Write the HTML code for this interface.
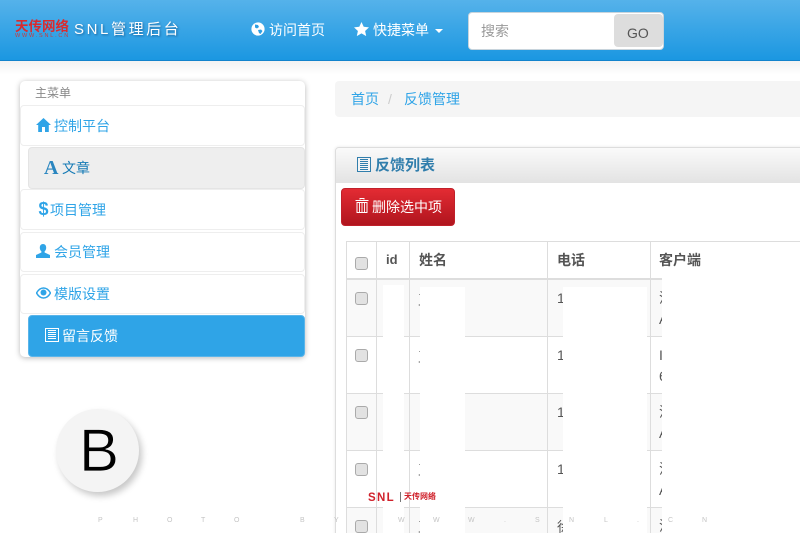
<!DOCTYPE html>
<html lang="zh"><head><meta charset="utf-8"><title>SNL管理后台</title>
<style>
html,body{margin:0;padding:0;background:#fff;width:800px;height:533px;overflow:hidden}
#p{position:absolute;left:0;top:0;width:800px;height:533px;overflow:hidden;font-family:"Liberation Sans","Noto Sans CJK SC",sans-serif;font-size:14px;color:#555;background:#fff}
#p div,#p span,#p svg{position:absolute;box-sizing:border-box}
.t{white-space:nowrap;line-height:20px}
.item{left:20px;width:285px;background:#fff;border:1px solid #eee;border-radius:4px}
.b{color:#2fa4e7}
.ln{background:#ddd}
.cb{left:355px;width:13px;height:13px;background:#e2e2e2;border:1px solid #aaa;border-radius:3px}
.wm{top:516px;font-size:7px;line-height:9px;color:#c4c4c4}
.frag{font-size:14px;line-height:20px;white-space:nowrap;color:#555}
</style></head><body>
<div id="p">

<div style="left:0;top:0;width:800px;height:61px;background:linear-gradient(#55b2ea,#1b97e1);border-bottom:1px solid #1283cc"></div>
<div style="left:0;top:61px;width:800px;height:14px;background:linear-gradient(#f2f2f2,#fff)"></div>

<div class="t" style="left:15px;top:20px;font-size:13.5px;line-height:14px;font-weight:700;color:#d92b2f">天传网络</div>
<div class="t" style="left:15px;top:33px;font-size:5.5px;line-height:6px;letter-spacing:1.800px;color:#c8393c">WWW.SNL.CN</div>
<div class="t" style="left:74px;top:20px;font-size:15px;color:#fff;letter-spacing:2.6px;text-shadow:1px 1px 2px rgba(0,50,100,.55)">SNL管理后台</div>

<svg style="left:251px;top:22px" width="14" height="14" viewBox="0 0 14 14"><circle cx="7" cy="7" r="6.6" fill="#fff"/><path d="M4 2.500l3 .5 1 2-2 1.500-2-1zM7 8l3-.5 1.500 1.500-2 3-1.500-1z" fill="#2d9fe4"/></svg>
<div class="t" style="left:269px;top:20px;color:#fff">访问首页</div>
<svg style="left:354px;top:22px" width="15" height="14" viewBox="0 0 15 14"><path d="M7.500 0l2.200 4.800 5.300.6-3.900 3.600 1.100 5.100-4.700-2.700-4.700 2.700 1.100-5.100L0 5.400l5.300-.6z" fill="#fff"/></svg>
<div class="t" style="left:373px;top:20px;color:#fff">快捷菜单</div>
<div style="left:435px;top:29px;width:0;height:0;border-left:4px solid transparent;border-right:4px solid transparent;border-top:4px solid #fff"></div>

<div style="left:468px;top:12px;width:196px;height:38px;background:#fff;border:1px solid #c8d4dc;border-radius:4px"></div>
<div class="t" style="left:481px;top:21px;color:#999">搜索</div>
<div style="left:614px;top:14px;width:49px;height:33px;background:#ddd;border-radius:4px"></div>
<div class="t" style="left:627px;top:23px;color:#555">GO</div>

<div style="left:20px;top:81px;width:285px;height:276px;background:#fff;border-radius:5px;box-shadow:0 1px 6px rgba(0,0,0,.28)"></div>
<div class="t" style="left:35px;top:83px;font-size:12px;color:#888">主菜单</div>

<div class="item" style="top:105px;height:41px"></div>
<svg style="left:36px;top:118px" width="15" height="14" viewBox="0 0 15 14"><path d="M7.500 0L0 7h2.200v7h3.800V9h3v5h3.800V7H15z" fill="#2fa4e7"/></svg>
<div class="t b" style="left:54px;top:116px">控制平台</div>

<div class="item" style="left:28px;width:277px;top:147px;height:42px;background:#eee;border-color:#e4e4e4"></div>
<div class="t" style="left:44px;top:158px;font-family:'Liberation Serif',serif;font-size:20px;font-weight:700;color:#2a86c0">A</div>
<div class="t" style="left:62px;top:158px;color:#157ab5">文章</div>

<div class="item" style="top:189px;height:41px"></div>
<div class="t b" style="left:38.500px;top:199px;font-size:18px;font-weight:700">$</div>
<div class="t b" style="left:50px;top:200px">项目管理</div>

<div class="item" style="top:232px;height:40px"></div>
<svg style="left:36px;top:244px" width="14" height="14" viewBox="0 0 14 14"><path d="M7 0c2 0 3.200 1.500 3.200 3.700 0 1.500-.7 2.900-1.600 3.700v1.100L14 11v3H0v-3l5.400-2.500V7.400C4.500 6.600 3.800 5.200 3.800 3.700 3.800 1.500 5 0 7 0z" fill="#2fa4e7"/></svg>
<div class="t b" style="left:54px;top:242px">会员管理</div>

<div class="item" style="top:274px;height:40px"></div>
<svg style="left:36px;top:287px" width="15" height="12" viewBox="0 0 15 12"><path d="M.5 6C2.200 3 4.700 1 7.500 1s5.300 2 7 5c-1.700 3-4.200 5-7 5S2.200 9 .5 6z" fill="none" stroke="#2fa4e7" stroke-width="1.500"/><circle cx="7.500" cy="5.500" r="3" fill="#2fa4e7"/></svg>
<div class="t b" style="left:54px;top:284px">模版设置</div>

<div style="left:28px;top:315px;width:277px;height:42px;background:#2fa4e7;border:1px solid #5ab5ea;border-radius:4px"></div>
<svg style="left:45px;top:328px" width="14" height="14" viewBox="0 0 14 14"><path d="M.5.500h13v13H.5z" fill="none" stroke="#fff"/><path d="M3 2.500h8M3 4.500h8M3 6.500h8M3 8.500h8M3 10.500h8" stroke="#fff" stroke-width=".9"/></svg>
<div class="t" style="left:62px;top:326px;color:#fff">留言反馈</div>

<div style="left:56px;top:409px;width:83px;height:83px;border-radius:50%;background:#f4f4f4;box-shadow:3px 4px 7px rgba(0,0,0,.22)"></div>
<div class="t" style="left:79px;top:418px;font-size:60px;line-height:66px;color:#000;-webkit-text-stroke:.8px #f4f4f4">B</div>

<div style="left:335px;top:81px;width:465px;height:36px;background:#f5f5f5;border-radius:4px 0 0 4px"></div>
<div class="t b" style="left:351px;top:89px">首页</div>
<div class="t" style="left:388px;top:89px;color:#ccc">/</div>
<div class="t b" style="left:404px;top:89px">反馈管理</div>

<div style="left:335px;top:147px;width:470px;height:400px;background:#fff;border:1px solid #ddd;border-radius:4px;box-shadow:0 0 3px rgba(0,0,0,.1)"></div>
<div style="left:336px;top:148px;width:464px;height:35px;background:linear-gradient(#fafafa,#e3e3e3);border-radius:3px 0 0 0"></div>
<svg style="left:357px;top:157px" width="14" height="15" viewBox="0 0 14 15"><path d="M.5.500h13v14H.5z" fill="#f4f4f4" stroke="#317eac"/><path d="M3 2.500h8M3 4.500h8M3 6.500h8M3 8.500h8M3 10.500h8M3 12.500h8" stroke="#317eac" stroke-width=".9"/></svg>
<div class="t" style="left:375px;top:156px;font-size:15px;font-weight:700;color:#317eac">反馈列表</div>

<div style="left:341px;top:188px;width:114px;height:38px;background:linear-gradient(#e32b33,#b0151e);border:1px solid #c0202a;border-radius:4px"></div>
<svg style="left:355px;top:198px" width="14" height="15" viewBox="0 0 14 15"><path d="M5 1.500V.500h4v1M.5 2.500h13M2 4.500h10v10H2z" fill="none" stroke="#fff"/><path d="M4.500 5v9M7 5v9M9.500 5v9" stroke="#fff" stroke-width=".9"/></svg>
<div class="t" style="left:372px;top:197px;color:#fff">删除选中项</div>

<div style="left:347px;top:279px;width:453px;height:57px;background:#f9f9f9"></div>
<div style="left:347px;top:393px;width:453px;height:57px;background:#f9f9f9"></div>
<div style="left:347px;top:507px;width:453px;height:26px;background:#f9f9f9"></div>
<div class="ln" style="left:346px;top:241px;width:454px;height:1px"></div>
<div class="ln" style="left:346px;top:278px;width:454px;height:2px"></div>
<div class="ln" style="left:346px;top:336px;width:454px;height:1px"></div>
<div class="ln" style="left:346px;top:393px;width:454px;height:1px"></div>
<div class="ln" style="left:346px;top:450px;width:454px;height:1px"></div>
<div class="ln" style="left:346px;top:507px;width:454px;height:1px"></div>
<div class="ln" style="left:346px;top:241px;width:1px;height:292px"></div>
<div class="ln" style="left:376px;top:241px;width:1px;height:292px"></div>
<div class="ln" style="left:409px;top:241px;width:1px;height:292px"></div>
<div class="ln" style="left:547px;top:241px;width:1px;height:292px"></div>
<div class="ln" style="left:650px;top:241px;width:1px;height:292px"></div>

<div class="t" style="left:386px;top:250px;font-size:13px;font-weight:700">id</div>
<div class="t" style="left:419px;top:250px;font-weight:700">姓名</div>
<div class="t" style="left:557px;top:250px;font-weight:700">电话</div>
<div class="t" style="left:659px;top:250px;font-weight:700">客户端</div>

<div class="cb" style="top:257px"></div>
<div class="cb" style="top:292px"></div>
<div class="cb" style="top:349px"></div>
<div class="cb" style="top:406px"></div>
<div class="cb" style="top:463px"></div>
<div class="cb" style="top:520px"></div>

<div class="frag" style="left:418px;top:290px">王</div><div class="frag" style="left:557px;top:288px">1</div><div class="frag" style="left:659px;top:288px">流</div><div class="frag" style="left:659px;top:309px">A</div>
<div class="frag" style="left:418px;top:347px">王</div><div class="frag" style="left:557px;top:345px">1</div><div class="frag" style="left:659px;top:345px">I</div><div class="frag" style="left:659px;top:366px">6</div>
<div class="frag" style="left:557px;top:402px">1</div><div class="frag" style="left:659px;top:402px">流</div><div class="frag" style="left:659px;top:423px">A</div>
<div class="frag" style="left:418px;top:460px">王</div><div class="frag" style="left:557px;top:459px">1</div><div class="frag" style="left:659px;top:459px">流</div><div class="frag" style="left:659px;top:480px">A</div>
<div class="frag" style="left:418px;top:517px">王</div><div class="frag" style="left:557px;top:517px">徐</div><div class="frag" style="left:659px;top:516px">流</div>

<div style="left:383px;top:285px;width:21px;height:248px;background:#fff"></div>
<div style="left:420px;top:287px;width:45px;height:246px;background:#fff"></div>
<div style="left:563px;top:287px;width:84px;height:246px;background:#fff"></div>
<div style="left:662px;top:278px;width:138px;height:255px;background:#fff"></div>

<div class="t" style="left:368px;top:490px;font-size:11.500px;line-height:16px;font-weight:700;letter-spacing:1.300px;color:#d0212b">SNL</div>
<div style="left:400px;top:492px;width:1px;height:10px;background:#777"></div>
<div class="t" style="left:404px;top:490px;font-size:8px;line-height:13px;font-weight:700;color:#d0212b">天传网络</div>

<div class="wm" style="left:98px">P</div><div class="wm" style="left:133px">H</div><div class="wm" style="left:167px">O</div><div class="wm" style="left:201px">T</div><div class="wm" style="left:234px">O</div><div class="wm" style="left:300px">B</div><div class="wm" style="left:334px">Y</div>
<div class="wm" style="left:398px">W</div><div class="wm" style="left:433px">W</div><div class="wm" style="left:468px">W</div><div class="wm" style="left:504px">.</div><div class="wm" style="left:535px">S</div><div class="wm" style="left:569px">N</div><div class="wm" style="left:604px">L</div><div class="wm" style="left:637px">.</div><div class="wm" style="left:668px">C</div><div class="wm" style="left:702px">N</div>
</div>
</body></html>
